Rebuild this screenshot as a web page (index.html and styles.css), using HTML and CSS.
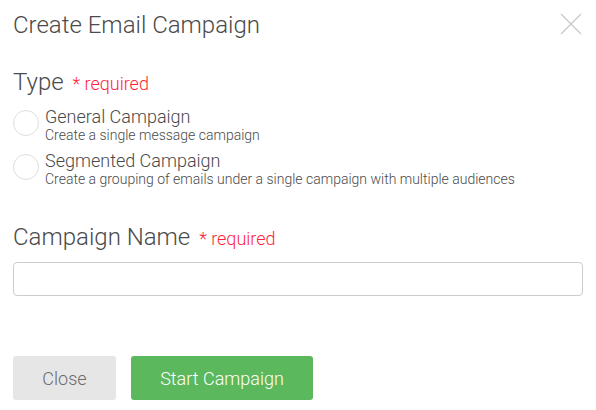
FILE: index.html
```html
<!DOCTYPE html>
<html>
<head>
<meta charset="utf-8">
<link rel="stylesheet" href="styles.css">
</head>
<body>
<div class="modal">
  <div class="header">
    <h1 class="title">Create Email Campaign</h1>
    <span class="close-x" aria-label="Close">
      <svg width="22" height="22" viewBox="0 0 22 22"><path d="M1 1L21 21M21 1L1 21" stroke="#c8c8c8" stroke-width="1.3" fill="none"/></svg>
    </span>
  </div>
  <div class="section">
    <div class="label">Type <span class="req">* required</span></div>
    <div class="radios">
      <label class="radio">
        <span class="circle"></span>
        <span class="rtext">
          <span class="rtitle">General Campaign</span>
          <span class="rdesc">Create a single message campaign</span>
        </span>
      </label>
      <label class="radio">
        <span class="circle"></span>
        <span class="rtext">
          <span class="rtitle">Segmented Campaign</span>
          <span class="rdesc">Create a grouping of emails under a single campaign with multiple audiences</span>
        </span>
      </label>
    </div>
  </div>
  <div class="section name">
    <div class="label">Campaign Name <span class="req">* required</span></div>
    <input class="input" type="text">
  </div>
  <div class="footer">
    <button class="btn btn-close">Close</button>
    <button class="btn btn-start">Start Campaign</button>
  </div>
</div>
</body>
</html>
```
FILE: styles.css
```css
* { box-sizing: border-box; }
html, body { margin: 0; padding: 0; background: #fff; }
body { font-family: Roboto, "Noto Sans", sans-serif; font-weight: 300; color: #4a4a4a; }
.modal { width: 596px; padding: 0 13px 0 13px; }
.header { display: flex; justify-content: space-between; align-items: flex-start; padding-top: 11px; height: 68px; }
.title { margin: 0; font-size: 24px; font-weight: 300; line-height: 28px; color: #4a4a4a; }
.close-x { margin-top: 2px; margin-right: 1px; display: block; }
.close-x svg { display: block; }
.label { font-size: 24px; line-height: 28px; color: #4a4a4a; }
.req { font-size: 18px; color: #ff1f3a; margin-left: 3px; }
.radios { display: flex; flex-direction: column; gap: 6px; margin-top: 8px; }
.radio { display: flex; align-items: flex-start; gap: 6px; }
.circle { width: 26px; height: 26px; border: 1.5px solid #dedede; border-radius: 50%; margin-top: 4px; flex: none; }
.rtext { display: flex; flex-direction: column; }
.rtitle { font-size: 18px; line-height: 21px; font-weight: 300; color: #4a4a4a; }
.rdesc { font-size: 14px; line-height: 17px; font-weight: 300; color: #4a4a4a; }
.section.name { margin-top: 35px; }
.input { display: block; width: 570px; height: 34px; margin-top: 9px; border: 1px solid #ccc; border-radius: 4px; }
.footer { display: flex; gap: 15px; margin-top: 60px; }
.btn { height: 44px; border: none; border-radius: 3px; font-family: Roboto, sans-serif; font-weight: 300; font-size: 18px; }
.btn-close { width: 103px; background: #e6e6e6; color: #6c6c6c; }
.btn-start { width: 182px; background: #5cb85c; color: #fff; }
```
